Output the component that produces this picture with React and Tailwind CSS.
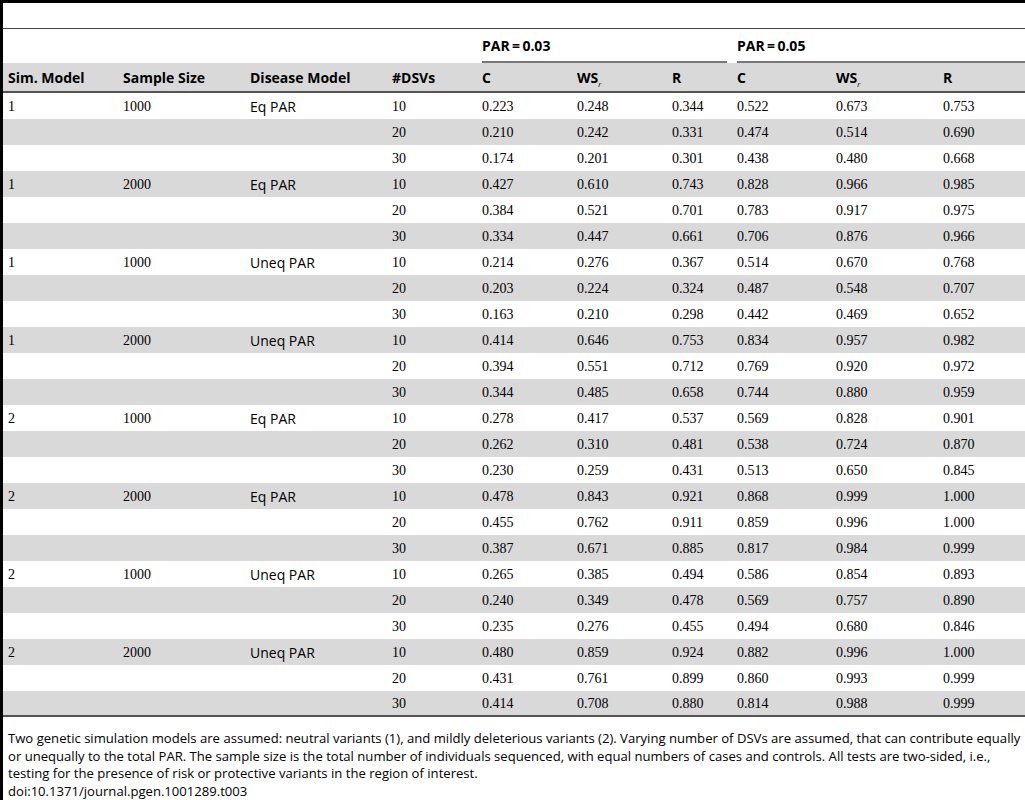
const groups = [
  ["1", "1000", "Eq PAR", [
    ["10", "0.223", "0.248", "0.344", "0.522", "0.673", "0.753"],
    ["20", "0.210", "0.242", "0.331", "0.474", "0.514", "0.690"],
    ["30", "0.174", "0.201", "0.301", "0.438", "0.480", "0.668"],
  ]],
  ["1", "2000", "Eq PAR", [
    ["10", "0.427", "0.610", "0.743", "0.828", "0.966", "0.985"],
    ["20", "0.384", "0.521", "0.701", "0.783", "0.917", "0.975"],
    ["30", "0.334", "0.447", "0.661", "0.706", "0.876", "0.966"],
  ]],
  ["1", "1000", "Uneq PAR", [
    ["10", "0.214", "0.276", "0.367", "0.514", "0.670", "0.768"],
    ["20", "0.203", "0.224", "0.324", "0.487", "0.548", "0.707"],
    ["30", "0.163", "0.210", "0.298", "0.442", "0.469", "0.652"],
  ]],
  ["1", "2000", "Uneq PAR", [
    ["10", "0.414", "0.646", "0.753", "0.834", "0.957", "0.982"],
    ["20", "0.394", "0.551", "0.712", "0.769", "0.920", "0.972"],
    ["30", "0.344", "0.485", "0.658", "0.744", "0.880", "0.959"],
  ]],
  ["2", "1000", "Eq PAR", [
    ["10", "0.278", "0.417", "0.537", "0.569", "0.828", "0.901"],
    ["20", "0.262", "0.310", "0.481", "0.538", "0.724", "0.870"],
    ["30", "0.230", "0.259", "0.431", "0.513", "0.650", "0.845"],
  ]],
  ["2", "2000", "Eq PAR", [
    ["10", "0.478", "0.843", "0.921", "0.868", "0.999", "1.000"],
    ["20", "0.455", "0.762", "0.911", "0.859", "0.996", "1.000"],
    ["30", "0.387", "0.671", "0.885", "0.817", "0.984", "0.999"],
  ]],
  ["2", "1000", "Uneq PAR", [
    ["10", "0.265", "0.385", "0.494", "0.586", "0.854", "0.893"],
    ["20", "0.240", "0.349", "0.478", "0.569", "0.757", "0.890"],
    ["30", "0.235", "0.276", "0.455", "0.494", "0.680", "0.846"],
  ]],
  ["2", "2000", "Uneq PAR", [
    ["10", "0.480", "0.859", "0.924", "0.882", "0.996", "1.000"],
    ["20", "0.431", "0.761", "0.899", "0.860", "0.993", "0.999"],
    ["30", "0.414", "0.708", "0.880", "0.814", "0.988", "0.999"],
  ]],
];

const sans = "font-['Open_Sans','Liberation_Sans',sans-serif]";
const serif = "font-['Liberation_Serif','Times_New_Roman',serif]";
const cols = "grid grid-cols-[112px_127px_142px_90px_95px_95px_65px_99px_107px_90px]";

const Ws = () => (
  <span>
    WS<sub className="text-[8px] italic font-normal align-[-2px]">r</sub>
  </span>
);

const App = () => {
  const rows = [];
  groups.forEach(([sim, size, disease, sub]) => {
    sub.forEach((r, i) => {
      rows.push({ sim: i === 0 ? sim : "", size: i === 0 ? size : "", disease: i === 0 ? disease : "", vals: r });
    });
  });

  return (
    <div className="flex w-[1025px] h-[800px] bg-white overflow-hidden text-black">
      <div className="w-[3px] shrink-0 bg-black" />
      <div className="flex flex-col w-[1022px]">
        <div className="h-[3px] bg-black" />
        <div className="h-[25px]" />
        <div className="h-px bg-[#444]" />

        {/* PAR group headings */}
        <div className={`${cols} h-[34px] ${sans} text-[14px] font-bold`}>
          <div className="col-span-4" />
          <div className="col-span-3 flex items-end">
            <div className="ml-2 mr-[2px] flex-1 pb-[5px] border-b-2 border-[#777]">PAR{"\u2009"}={"\u2009"}0.03</div>
          </div>
          <div className="col-span-3 flex items-end">
            <div className="ml-2 flex-1 pb-[5px] border-b-2 border-[#777]">PAR{"\u2009"}={"\u2009"}0.05</div>
          </div>
        </div>

        <div className={`${cols} h-[31px] pt-[2px] items-center bg-[#d9d9d9] border-b-2 border-[#555] ${sans} text-[14px] font-bold`}>
          <div className="pl-[5px]">Sim. Model</div>
          <div className="pl-2">Sample Size</div>
          <div className="pl-2">Disease Model</div>
          <div className="pl-2">#DSVs</div>
          <div className="pl-2">C</div>
          <div className="pl-2"><Ws /></div>
          <div className="pl-2">R</div>
          <div className="pl-2">C</div>
          <div className="pl-2"><Ws /></div>
          <div className="pl-2">R</div>
        </div>

        <div className={`${serif} text-[14px]`}>
          {rows.map((r, i) => (
            <div
              key={i}
              className={`${cols} h-[26px] items-center ${i % 2 === 1 ? "bg-[#d9d9d9]" : ""} ${i === rows.length - 1 ? "border-b-2 border-[#555]" : ""}`}
            >
              <div className="pl-[5px]">{r.sim}</div>
              <div className="pl-2">{r.size}</div>
              <div className={`pl-2 ${sans} text-[14px]`}>{r.disease}</div>
              {r.vals.map((v, j) => (
                <div key={j} className="pl-2">{v}</div>
              ))}
            </div>
          ))}
        </div>

        <div className={`${sans} text-[13.1px] leading-[17.4px] pl-[5px] pt-[13px]`}>
          <p>
            Two genetic simulation models are assumed: neutral variants (1), and mildly deleterious variants (2). Varying number of DSVs are assumed, that can contribute equally or unequally to the total PAR. The sample size is the total number of individuals sequenced, with equal numbers of cases and controls. All tests are two-sided, i.e., testing for the presence of risk or protective variants in the region of interest.
          </p>
          <p>doi:10.1371/journal.pgen.1001289.t003</p>
        </div>
      </div>
    </div>
  );
};

export default App;
